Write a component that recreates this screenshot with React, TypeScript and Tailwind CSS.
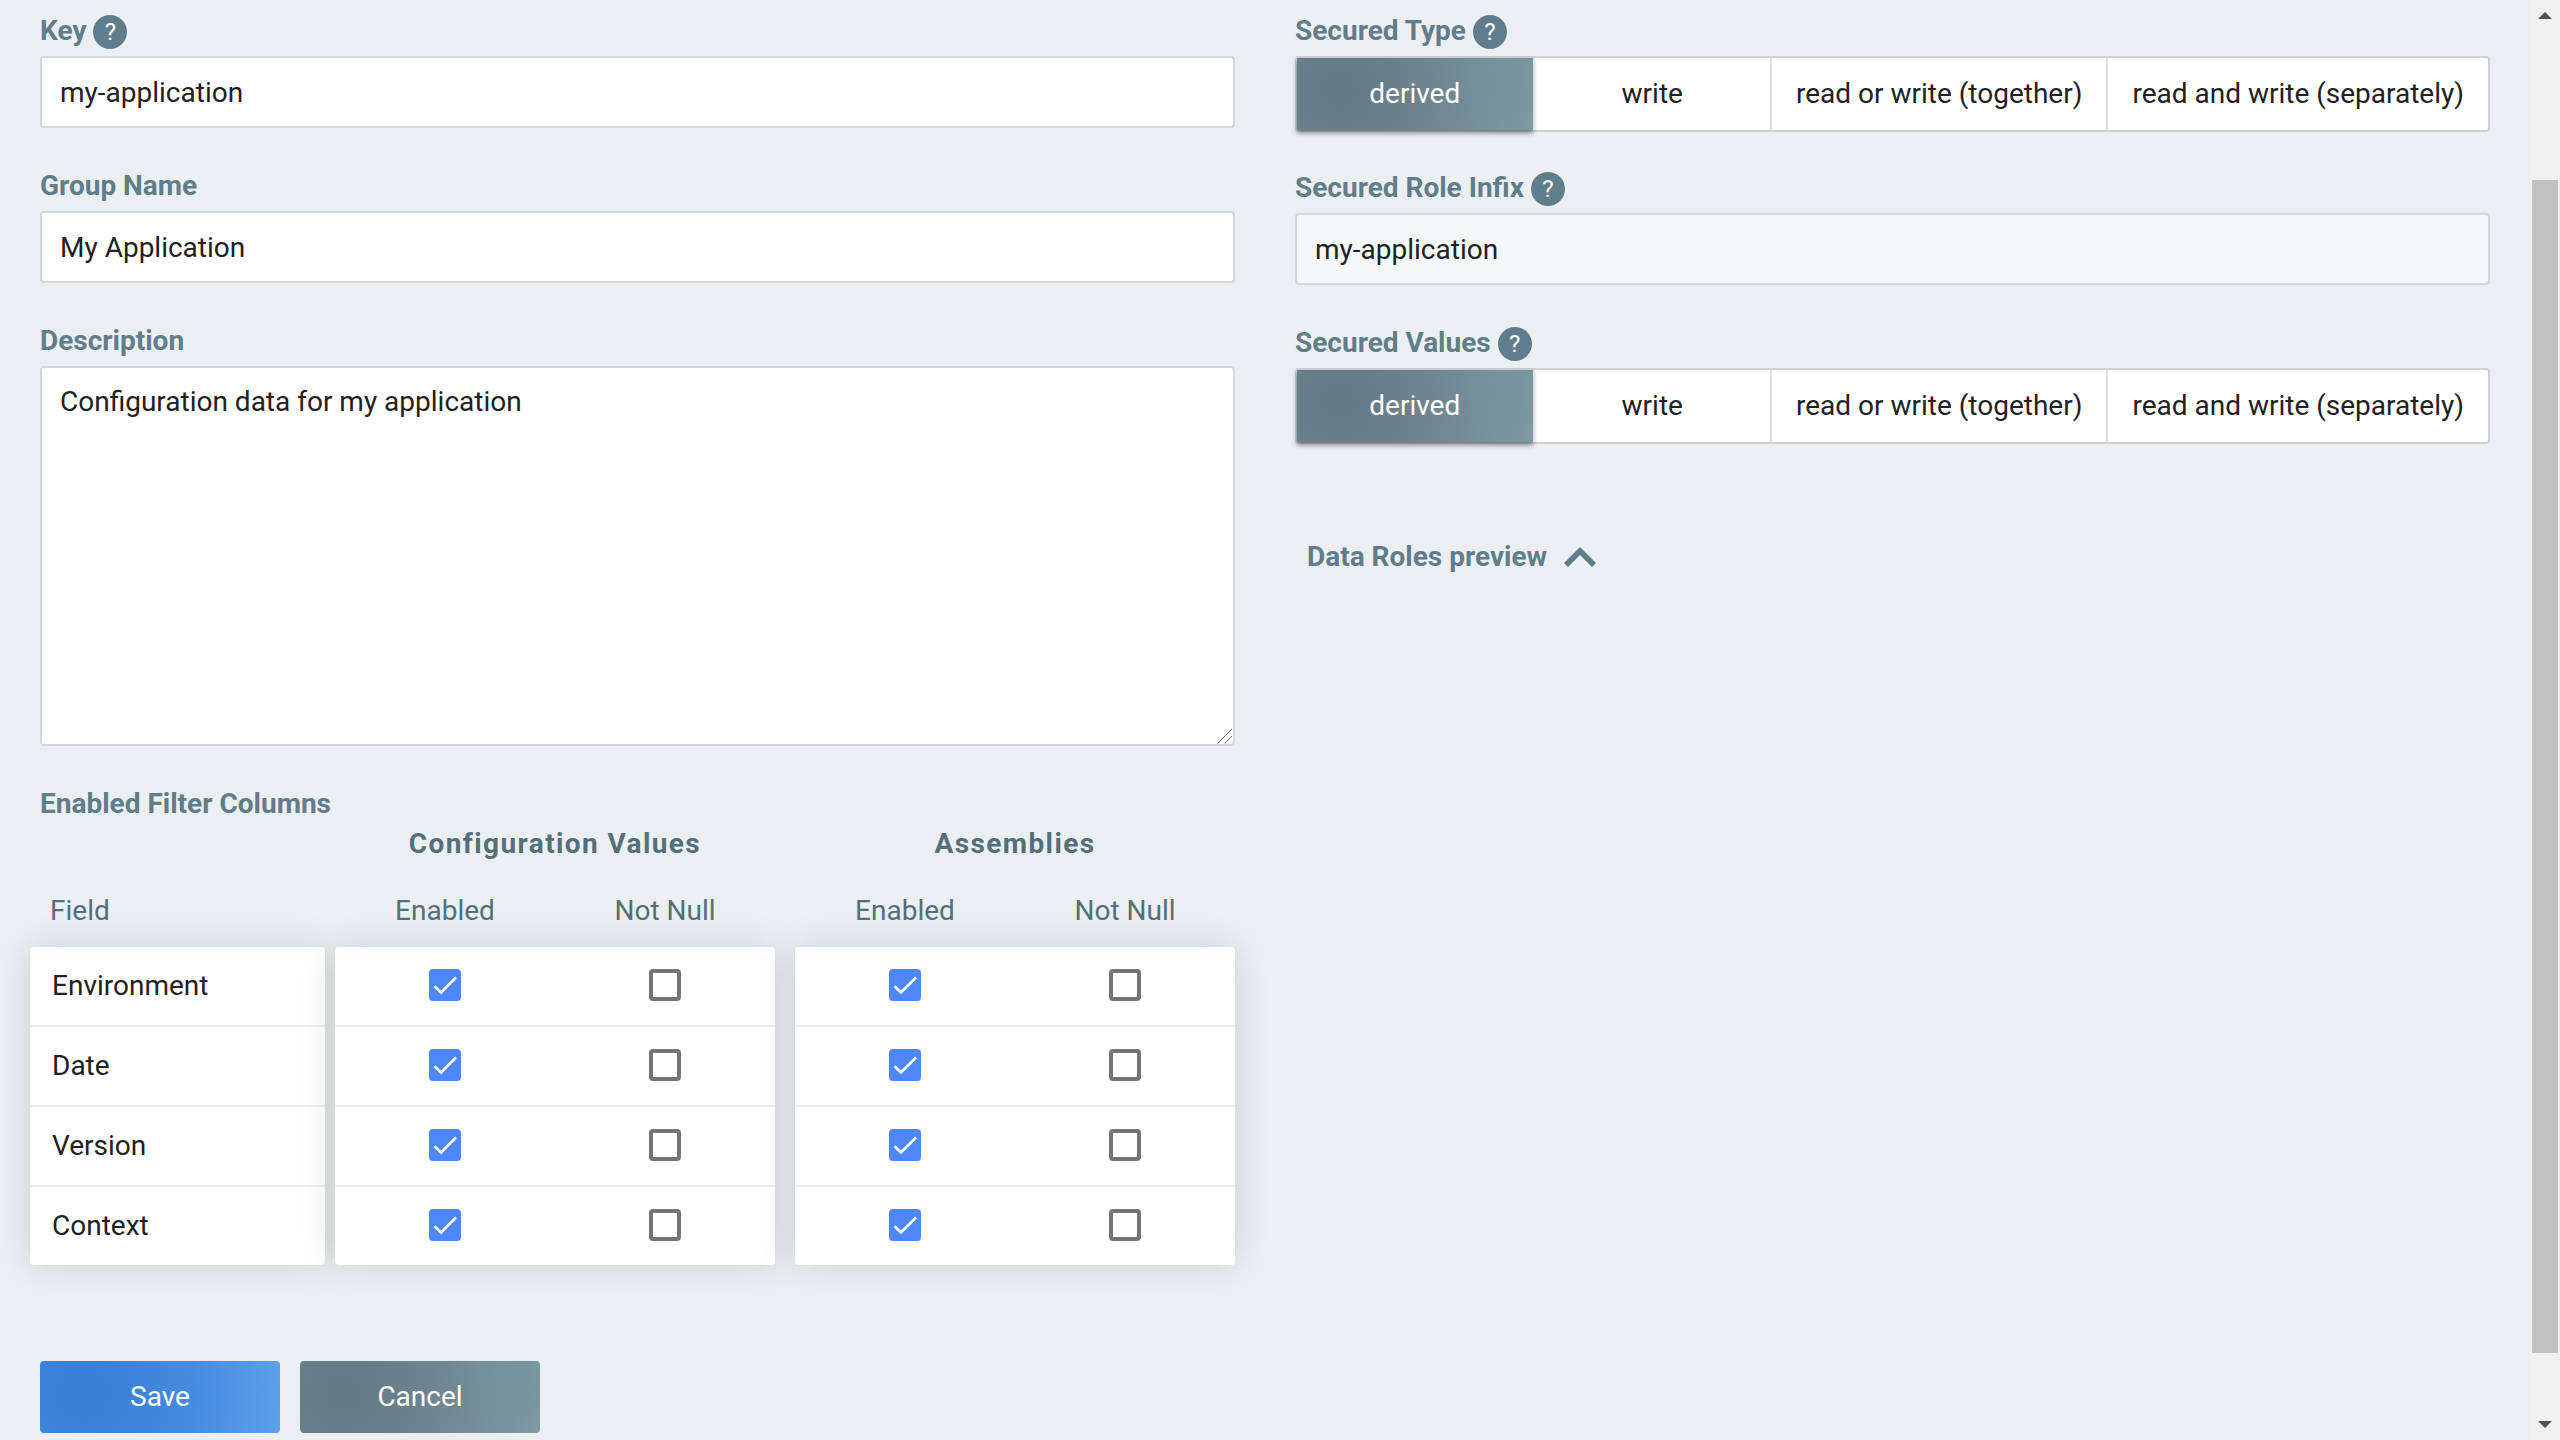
import { useId, useState } from "react";

const labelText = "text-[28px] leading-[36px] font-bold text-[#607d8b]";
const field =
  "block w-full rounded-[4px] border-2 border-[#cfd8dc] px-[18px] text-[28px] leading-[36px] text-[#212121] outline-none focus:border-[#607d8b]";
const slateFill =
  "bg-[radial-gradient(circle_at_90%_20%,rgba(112,148,156,0.6),transparent_30%),radial-gradient(circle_at_18%_45%,#607983,#6c8590_45%,#8199a6)]";
const blueFill = "bg-[radial-gradient(circle_at_18%_45%,#387dd6,#468bdf_55%,#5f9fe9)]";

const headText = "text-[28px] leading-[36px] text-[#546e7a]";
const tableBody = "block rounded-[4px] bg-white shadow-[0_0_36px_rgba(0,0,0,0.13)]";
const tableRow = "h-20 border-b-2 border-[#eeeeee] last:h-[78px] last:border-b-0";

const securedOptions = [
  "derived",
  "write",
  "read or write (together)",
  "read and write (separately)",
];

const filterFields = ["Environment", "Date", "Version", "Context"];

function HelpIcon({ topic }: { topic: string }) {
  return (
    <button
      type="button"
      aria-label={`Help: ${topic}`}
      className="flex size-[34px] items-center justify-center rounded-full bg-[#607d8b] text-[24px] leading-none text-white"
    >
      ?
    </button>
  );
}

function FieldLabel({
  htmlFor,
  help,
  children,
}: {
  htmlFor: string;
  help?: boolean;
  children: string;
}) {
  return (
    <div className="flex h-[43px] items-start gap-[7px]">
      <label htmlFor={htmlFor} className={labelText}>
        {children}
      </label>
      {help && (
        <span className="pt-0.5">
          <HelpIcon topic={children} />
        </span>
      )}
    </div>
  );
}

function SegmentedControl({ title }: { title: string }) {
  const id = useId();
  const [value, setValue] = useState("derived");

  return (
    <div>
      <div className="flex h-[43px] items-start gap-[7px]">
        <span id={id} className={labelText}>
          {title}
        </span>
        <span className="pt-0.5">
          <HelpIcon topic={title} />
        </span>
      </div>
      <div
        role="group"
        aria-labelledby={id}
        className="flex h-[76px] rounded-[4px] border-2 border-[#cdd1d4] bg-white"
      >
        {securedOptions.map((option, i) => (
          <button
            key={option}
            type="button"
            aria-pressed={value === option}
            onClick={() => setValue(option)}
            className={[
              "px-6 text-[28px] leading-[36px] whitespace-nowrap",
              i < 2 ? "flex-1" : "",
              i > 0 ? "border-l-2 border-[#e0e0e0]" : "",
              value === option
                ? `${slateFill} text-white shadow-[0_3px_5px_rgba(0,0,0,0.45)]`
                : "text-[#212121]",
            ].join(" ")}
          >
            {option}
          </button>
        ))}
      </div>
    </div>
  );
}

function Checkbox({ label, defaultChecked }: { label: string; defaultChecked?: boolean }) {
  return (
    <span className="relative block size-8">
      <input
        type="checkbox"
        aria-label={label}
        defaultChecked={defaultChecked}
        className="peer block size-8 appearance-none rounded-[4px] border-4 border-[#757575] bg-white checked:border-[#4e87fc] checked:bg-[#4e87fc]"
      />
      <svg
        viewBox="0 0 32 32"
        className="pointer-events-none absolute inset-0 hidden size-8 peer-checked:block"
        fill="none"
        stroke="white"
        strokeWidth="2.6"
        aria-hidden="true"
      >
        <path d="M5.5 17.2 12 23.5 27 8.5" />
      </svg>
    </span>
  );
}

function FilterGroup({ title }: { title: string }) {
  return (
    <table className="block flex-[440]">
      <thead className={`block ${headText}`}>
        <tr className="block h-[60px]">
          <th colSpan={2} className="block text-center font-bold tracking-wider">
            {title}
          </th>
        </tr>
        <tr className="grid h-[61px] grid-cols-2 pt-[7px]">
          <th className="text-center font-normal">Enabled</th>
          <th className="text-center font-normal">Not Null</th>
        </tr>
      </thead>
      <tbody className={tableBody}>
        {filterFields.map((name) => (
          <tr key={name} className={`grid grid-cols-2 place-items-center pb-0.5 ${tableRow}`}>
            <td className="block">
              <Checkbox label={`${title}: ${name} enabled`} defaultChecked />
            </td>
            <td className="block">
              <Checkbox label={`${title}: ${name} not null`} />
            </td>
          </tr>
        ))}
      </tbody>
    </table>
  );
}

function ScrollTrack() {
  return (
    <div aria-hidden="true" className="flex h-screen w-[30px] flex-col bg-[#f0f0f0] px-0.5">
      <div className="flex h-[34px] justify-center pt-3">
        <svg width="14" height="7" viewBox="0 0 14 7" fill="#505050">
          <path d="M7 0 14 7H0Z" />
        </svg>
      </div>
      <div className="flex-[146]" />
      <div className="flex-[1173] bg-[#c1c1c1]" />
      <div className="flex-[53]" />
      <div className="flex h-[34px] items-end justify-center pb-3">
        <svg width="14" height="7" viewBox="0 0 14 7" fill="#505050">
          <path d="M0 0H14L7 7Z" />
        </svg>
      </div>
    </div>
  );
}

export default function App() {
  return (
    <div className="flex min-h-screen bg-[#ebeff2] font-[Roboto,sans-serif]">
      <form className="flex-1 px-10 pt-[13px]" onSubmit={(e) => e.preventDefault()}>
        <div className="grid grid-cols-2 gap-[60px]">
          <div className="flex flex-col gap-10">
            <div>
              <FieldLabel htmlFor="key" help>
                Key
              </FieldLabel>
              <input id="key" defaultValue="my-application" className={`${field} h-[72px] bg-white`} />
            </div>
            <div>
              <FieldLabel htmlFor="group-name">Group Name</FieldLabel>
              <input
                id="group-name"
                defaultValue="My Application"
                className={`${field} h-[72px] bg-white`}
              />
            </div>
            <div>
              <FieldLabel htmlFor="description">Description</FieldLabel>
              <div className="relative">
                <textarea
                  id="description"
                  defaultValue="Configuration data for my application"
                  className={`${field} h-[380px] resize-none bg-white py-4`}
                />
                <svg
                  width="16"
                  height="16"
                  viewBox="0 0 16 16"
                  className="pointer-events-none absolute right-0.5 bottom-0.5"
                  stroke="#606060"
                  aria-hidden="true"
                >
                  <path d="M0.5 15.5 15 1M7.5 15.5 15 8" />
                </svg>
              </div>
            </div>
            <div>
              <h2 className={labelText}>Enabled Filter Columns</h2>
              <div className="-ml-2.5 flex pt-1">
                <table className="block flex-[295]">
                  <thead className={`block ${headText}`}>
                    <tr className="block h-[121px] px-5 pt-[67px]">
                      <th className="block text-left font-normal">Field</th>
                    </tr>
                  </thead>
                  <tbody className={tableBody}>
                    {filterFields.map((name) => (
                      <tr key={name} className={`flex items-center px-[22px] ${tableRow}`}>
                        <td className="text-[28px] leading-[36px] text-[#212121]">{name}</td>
                      </tr>
                    ))}
                  </tbody>
                </table>
                <div className="ml-2.5 flex flex-[900] gap-5">
                  <FilterGroup title="Configuration Values" />
                  <FilterGroup title="Assemblies" />
                </div>
              </div>
            </div>
          </div>

          <div>
            <SegmentedControl title="Secured Type" />
            <div className="mt-[38px] mb-10">
              <FieldLabel htmlFor="role-infix" help>
                Secured Role Infix
              </FieldLabel>
              <input
                id="role-infix"
                defaultValue="my-application"
                readOnly
                className={`${field} h-[72px] bg-[#f6f7f9]`}
              />
            </div>
            <SegmentedControl title="Secured Values" />
            <button
              type="button"
              className={`${labelText} mt-[95px] ml-3 flex items-center gap-4`}
            >
              Data Roles preview
              <svg width="34" height="22" viewBox="0 0 34 22" fill="#607d8b" aria-hidden="true">
                <path d="M17 1 33 17 29 21 17 9 5 21 1 17Z" />
              </svg>
            </button>
          </div>
        </div>

        <div className="flex gap-5 pt-24 pb-[7px]">
          <button
            type="submit"
            className={`${blueFill} h-[72px] w-60 rounded-[4px] text-[28px] leading-[36px] text-white`}
          >
            Save
          </button>
          <button
            type="button"
            className={`${slateFill} h-[72px] w-60 rounded-[4px] text-[28px] leading-[36px] text-white`}
          >
            Cancel
          </button>
        </div>
      </form>
      <ScrollTrack />
    </div>
  );
}
